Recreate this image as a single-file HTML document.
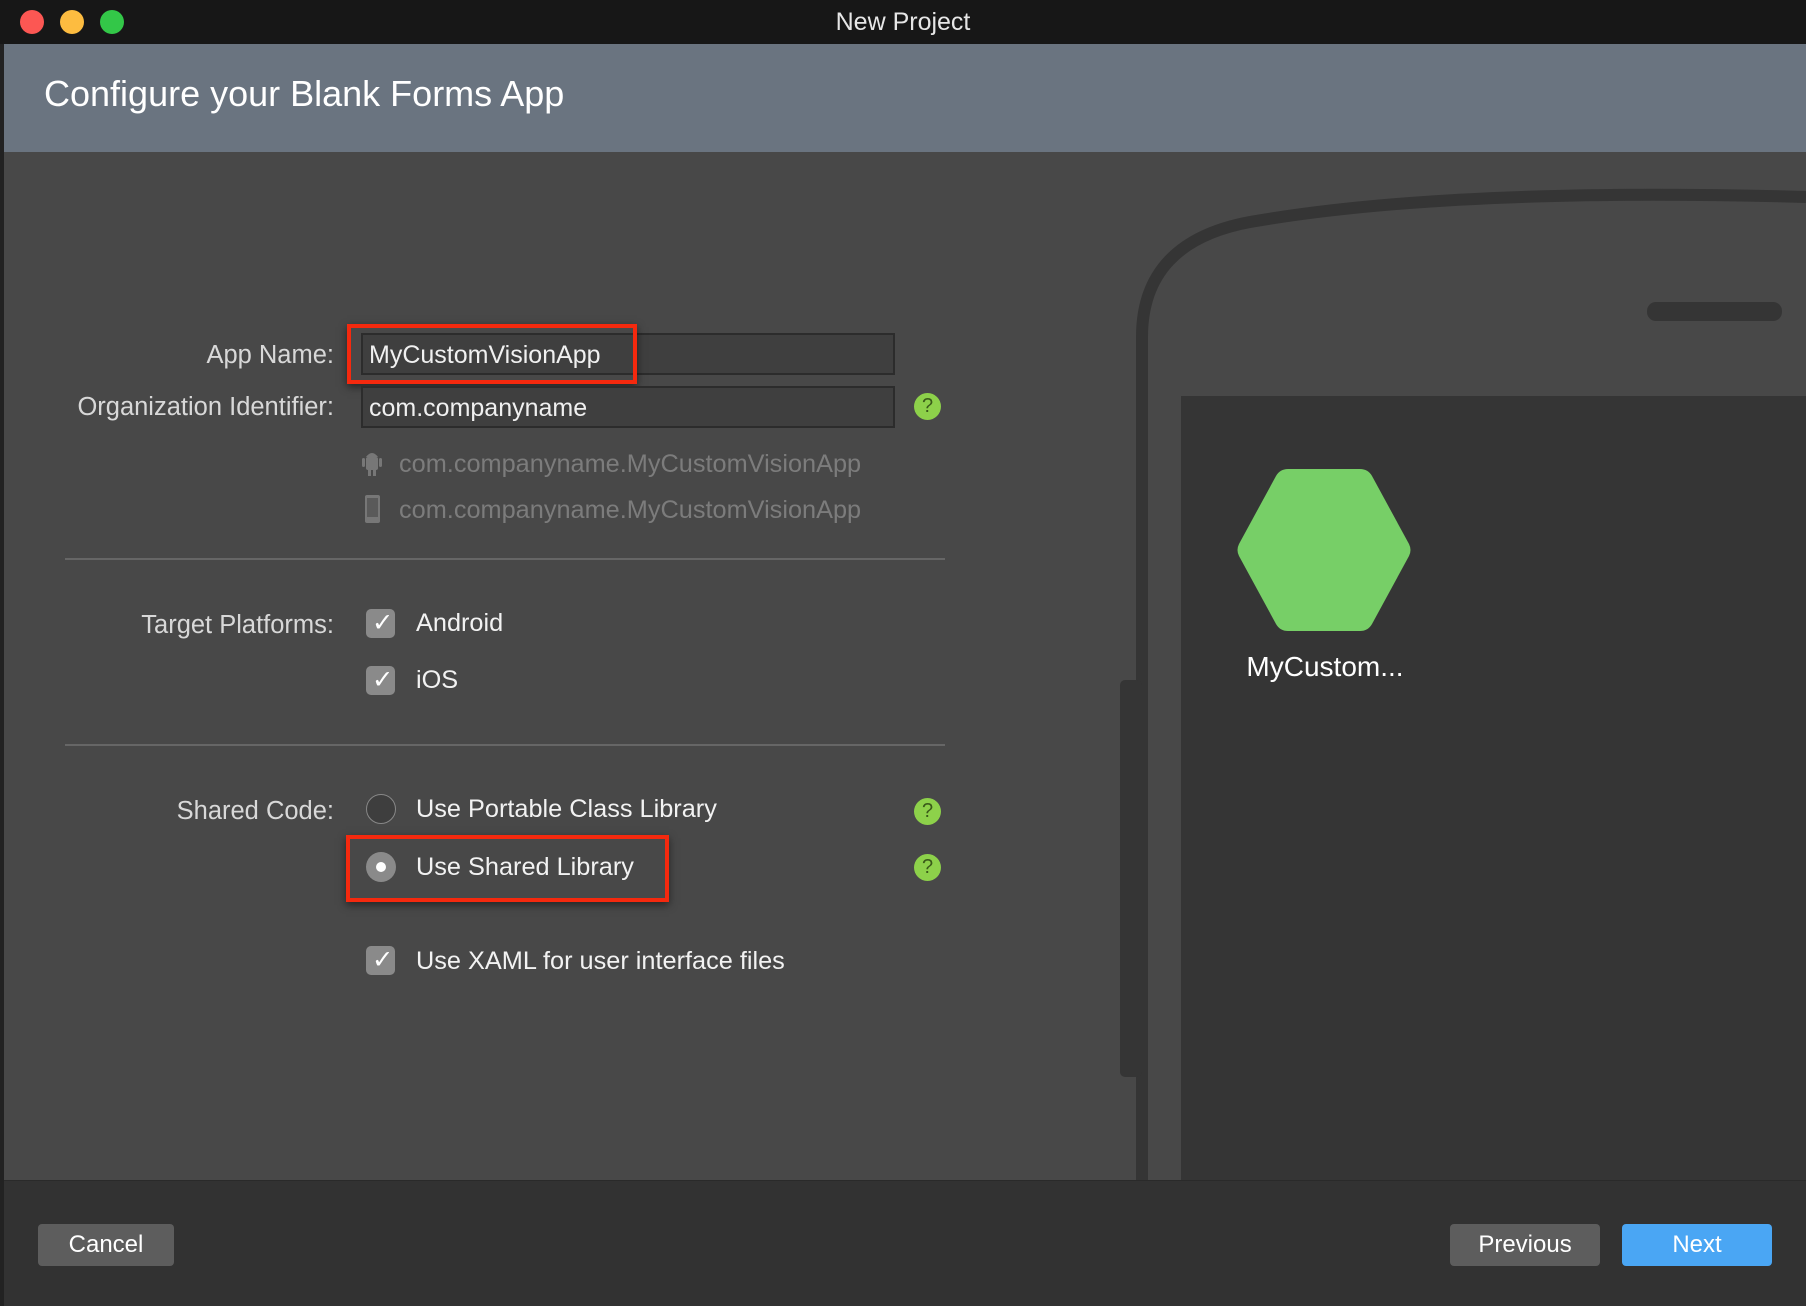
<!DOCTYPE html>
<html><head><meta charset="utf-8"><style>
*{margin:0;padding:0;box-sizing:border-box}
body{width:1806px;height:1306px;overflow:hidden;background:#484848;font-family:"Liberation Sans",sans-serif;position:relative;color:#eee}
.a{position:absolute}
.lbl{position:absolute;right:1472px;font-size:25.5px;color:#d8d8d8;white-space:nowrap;line-height:28px}
.txt{position:absolute;font-size:25.3px;color:#f2f2f2;white-space:nowrap;line-height:28px}
.inp{position:absolute;left:361px;width:534px;background:#3f3f3f;border:2px solid #2c2c2c;font-size:25px;color:#f0f0f0;padding-left:6px;line-height:40px}
.cb{position:absolute;left:366px;width:29px;height:29px;border-radius:5px;background:#8a8a8a}
.help{position:absolute;left:914px;width:27px;height:27px;border-radius:50%;background:#8dd14a;color:#3a5a1a;font-size:20px;text-align:center;line-height:27px}
.sep{position:absolute;left:65px;width:880px;height:2px;background:#666}
.btn{position:absolute;top:1224px;height:42px;border-radius:4px;background:#5d5d5d;color:#fff;font-size:24px;text-align:center;line-height:42px}
.red{position:absolute;border:4px solid #f5290e;box-shadow:0 3px 8px rgba(0,0,0,.5)}
</style></head><body>
<div class="a" style="left:0;top:0;width:1806px;height:44px;background:#171717"></div>
<div class="a" style="left:20px;top:10px;width:24px;height:24px;border-radius:50%;background:#fc5753"></div>
<div class="a" style="left:60px;top:10px;width:24px;height:24px;border-radius:50%;background:#fdbc40"></div>
<div class="a" style="left:100px;top:10px;width:24px;height:24px;border-radius:50%;background:#33c748"></div>
<div class="a" style="left:0;top:8px;width:1806px;text-align:center;font-size:25px;color:#e6e6e6">New Project</div>
<div class="a" style="left:4px;top:44px;width:1802px;height:108px;background:#6a7480"></div>
<div class="a" style="left:44px;top:73px;font-size:36px;color:#fff">Configure your Blank Forms App</div>
<div class="a" style="left:0;top:44px;width:4px;height:1262px;background:#222"></div>

<svg class="a" style="left:1100px;top:152px" width="706" height="1028">
<path d="M42 1028 V185 Q42 90 150 70 Q350 35 706 45" fill="none" stroke="#353535" stroke-width="12"/>
<rect x="20" y="528" width="22" height="397" rx="5" fill="#353535"/>
<rect x="81" y="244" width="625" height="784" fill="#353535"/>
<rect x="547" y="150" width="135" height="19" rx="9" fill="#353535"/>
<path d="M188 317 H260 Q268 317 272 324 L309 392 Q312 398 309 404 L272 472 Q268 479 260 479 H188 Q180 479 176 472 L139 404 Q136 398 139 392 L176 324 Q180 317 188 317Z" fill="#77cf67"/>
</svg>
<div class="a" style="left:1225px;top:651px;width:200px;text-align:center;font-size:28px;color:#fff">MyCustom...</div>

<div class="lbl" style="top:341px">App Name:</div>
<div class="inp" style="top:333px;height:42px">MyCustomVisionApp</div>
<div class="red" style="left:347px;top:324px;width:290px;height:60px"></div>
<div class="lbl" style="top:393px">Organization Identifier:</div>
<div class="inp" style="top:386px;height:42px">com.companyname</div>
<div class="help" style="top:393px">?</div>
<svg class="a" style="left:362px;top:449px" width="20" height="28"><rect x="4" y="8" width="12" height="13" rx="2" fill="#777"/><path d="M4 8 Q10 0 16 8Z" fill="#777"/><rect x="0" y="9" width="3" height="9" rx="1.5" fill="#777"/><rect x="17" y="9" width="3" height="9" rx="1.5" fill="#777"/><rect x="6" y="20" width="3" height="7" fill="#777"/><rect x="11" y="20" width="3" height="7" fill="#777"/></svg>
<div class="txt" style="left:399px;top:450px;color:#7c7c7c">com.companyname.MyCustomVisionApp</div>
<svg class="a" style="left:365px;top:495px" width="15" height="28"><rect x="0" y="0" width="15" height="28" rx="2" fill="#777"/><rect x="2" y="3" width="11" height="19" fill="#5a5a5a"/></svg>
<div class="txt" style="left:399px;top:496px;color:#7c7c7c">com.companyname.MyCustomVisionApp</div>
<div class="sep" style="top:558px"></div>

<div class="lbl" style="top:611px">Target Platforms:</div>
<div class="cb" style="top:609px"></div><div class="txt" style="left:372px;top:609px;color:#fff">✓</div>
<div class="txt" style="left:416px;top:609px">Android</div>
<div class="cb" style="top:666px"></div><div class="txt" style="left:372px;top:666px;color:#fff">✓</div>
<div class="txt" style="left:416px;top:666px">iOS</div>
<div class="sep" style="top:744px"></div>

<div class="lbl" style="top:797px">Shared Code:</div>
<div class="a" style="left:366px;top:794px;width:30px;height:30px;border-radius:50%;border:1.5px solid #888;background:#3e3e3e"></div>
<div class="txt" style="left:416px;top:795px">Use Portable Class Library</div>
<div class="help" style="top:798px">?</div>
<div class="a" style="left:366px;top:852px;width:30px;height:30px;border-radius:50%;background:#8a8a8a"></div>
<div class="a" style="left:376px;top:862px;width:10px;height:10px;border-radius:50%;background:#fff"></div>
<div class="txt" style="left:416px;top:853px">Use Shared Library</div>
<div class="help" style="top:854px">?</div>
<div class="red" style="left:346px;top:835px;width:323px;height:67px"></div>
<div class="cb" style="top:946px"></div><div class="txt" style="left:372px;top:946px;color:#fff">✓</div>
<div class="txt" style="left:416px;top:947px">Use XAML for user interface files</div>

<div class="a" style="left:4px;top:1180px;width:1802px;height:126px;background:#323232;border-top:1px solid #2a2a2a"></div>
<div class="btn" style="left:38px;width:136px">Cancel</div>
<div class="btn" style="left:1450px;width:150px">Previous</div>
<div class="btn" style="left:1622px;width:150px;background:#4aa6f4">Next</div>
</body></html>
